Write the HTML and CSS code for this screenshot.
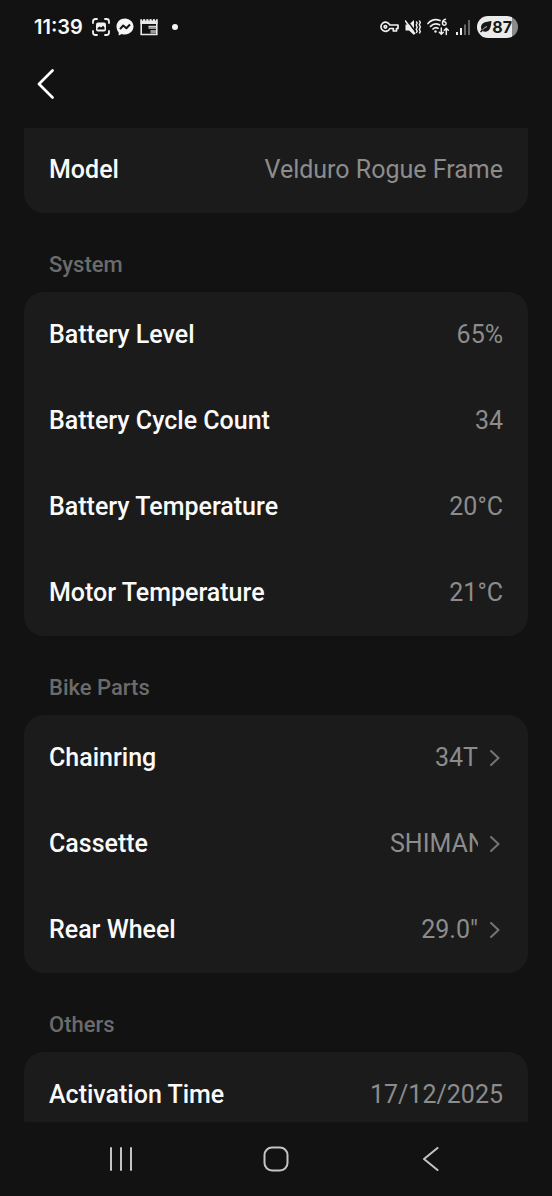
FILE: index.html
```html
<!DOCTYPE html>
<html lang="en">
<head>
<meta charset="utf-8">
<meta name="viewport" content="width=device-width, initial-scale=1">
<title>Bike details</title>
<link rel="stylesheet" href="styles.css">
</head>
<body>
<div class="status">
  <div class="status-group">
    <span class="clock">11:39</span>
    <svg width="18" height="18" viewBox="0 0 18 18" fill="none" stroke="#f2f2f2" stroke-width="1.8" stroke-linecap="round"><path d="M1 5V3.500Q1 1 3.500 1H5M13 1h1.500Q17 1 17 3.500V5M17 13v1.500Q17 17 14.500 17H13M5 17H3.500Q1 17 1 14.500V13"/><rect x="4" y="4.500" width="10" height="9" rx="2" fill="#f2f2f2" stroke="none"/><path d="M5.500 11.500V10l2-1.500 1.500 1L11 7.800l1.500 1.500v2.200z" fill="#121212" stroke="none"/></svg>
    <svg width="18" height="18" viewBox="0 0 18 18"><path d="M9 .5C4.200.5.500 4 .5 8.600c0 2.500 1 4.600 2.200 6v2.900l3.100-1.500c1 .4 2 .5 3.200.5 4.800 0 8.500-3.500 8.500-7.900S13.800.5 9 .5z" fill="#f5f5f5"/><path d="M4 11.200l3.200-3.700 3.200 2.700L14 6.500" fill="none" stroke="#121212" stroke-width="2" stroke-linejoin="round"/></svg>
    <svg width="18" height="18" viewBox="0 0 18 18"><path d="M1.200 2h15.600v14.500H1.200z" fill="none" stroke="#e8e8e8" stroke-width="1.600"/><path d="M.5 1.500h17V6H.5z" fill="#e8e8e8"/><path d="M2.500 0v2.500M5.700 0v2.500M9 0v2.500M12.300 0v2.500M15.500 0v2.500" stroke="#121212" stroke-width="1.200"/><path d="M8.500 8.300H16V11H8.500zM10.500 12H16v3.500h-5.500z" fill="#999"/><path d="M8.500 8.300H16" stroke="#e8e8e8"/></svg>
    <span class="dot"></span>
  </div>
  <div class="status-group">
    <svg width="19" height="12" viewBox="0 0 19 12" fill="none" stroke="#f0f0f0" stroke-width="1.700" stroke-linejoin="round"><path d="M9.800 4H18v3.500h-1.500V10h-3.200V7.500H9.800A4.600 4.600 0 1 1 9.800 4z"/><circle cx="5.400" cy="5.800" r="1.300"/></svg>
    <svg width="16" height="17" viewBox="0 0 16 17"><path d="M.5 5.500H4L9 1v15l-5-4.500H.5z" fill="#f0f0f0"/><path d="M1 0l10 13.500" stroke="#121212" stroke-width="1.600"/><path d="M0 1.500l10 13.500" stroke="#f0f0f0" stroke-width="1.600"/><path d="M11.200 2.500l1 1.500-1 2 1 2.200-1 2 1 2-1 1.800M14.300 1.500l1 2-1 2 1 2.500-1 2.500 1 2-1 2" fill="none" stroke="#f0f0f0" stroke-width="1.400"/></svg>
    <svg width="23" height="18" viewBox="0 0 23 18" fill="none" stroke="#eee" stroke-width="1.700" stroke-linecap="round"><path d="M1 5.500C4.500 1.500 9 1 13 2.500M3.500 8.300C6 5.700 9.500 5.300 12.500 6.800M6 11C7.500 9.600 9.500 9.500 11 10.300"/><circle cx="8.500" cy="13.500" r="1.200" fill="#eee" stroke="none"/><path d="M18.500 1.200C16 2 15.300 4 15.500 5.500a1.800 1.800 0 1 0 1.500-1.800" stroke-width="1.500"/><path d="M14.300 10v6M12.300 14.200l2 2 2-2M19.300 16.500v-6M17.300 12.200l2-2 2 2" stroke-width="1.500"/></svg>
    <svg width="15" height="15" viewBox="0 0 15 15"><path d="M0 12h2v3H0zM4 8h2v7H4z" fill="#eee"/><path d="M8 4.500h2V15H8zM12 0h2v15h-2z" fill="#666"/></svg>
    <span class="battery"><svg width="12" height="12" viewBox="0 0 12 12"><path d="M11.500 0C6 .8 1.500 1.500 1 6c-.1 1 .2 2 .6 2.700L0 10.500l1 1 1.700-1.600c1 .7 2.300 1 3.800.6C10.500 9.500 11 5 11.500 0z" fill="#181818"/><path d="M2.500 8.800Q4.500 6.500 7 5.500" stroke="#eee" stroke-width=".8" fill="none"/></svg>87</span>
  </div>
</div>

<header class="header">
  <button class="back" type="button" aria-label="Back"><svg width="18" height="30" viewBox="0 0 18 30" fill="none" stroke="#fff" stroke-width="2.700" stroke-linecap="round" stroke-linejoin="round"><path d="M16.500 1.500L3 15l13.500 13.500"/></svg></button>
</header>

<main class="content">
  <ul class="card card-continued">
    <li class="row"><span class="label">Model</span><span class="value">Velduro Rogue Frame</span></li>
  </ul>

  <h2 class="title">System</h2>
  <ul class="card">
    <li class="row"><span class="label">Battery Level</span><span class="value">65%</span></li>
    <li class="row"><span class="label">Battery Cycle Count</span><span class="value">34</span></li>
    <li class="row"><span class="label">Battery Temperature</span><span class="value">20°C</span></li>
    <li class="row"><span class="label">Motor Temperature</span><span class="value">21°C</span></li>
  </ul>

  <h2 class="title">Bike Parts</h2>
  <ul class="card">
    <li><button class="row" type="button"><span class="label">Chainring</span><span class="value value-short">34T</span><svg class="chevron" viewBox="0 0 12 20"><path d="M1 3l7.500 7-7.500 7"/></svg></button></li>
    <li><button class="row" type="button"><span class="label">Cassette</span><span class="value value-short">SHIMANO</span><svg class="chevron" viewBox="0 0 12 20"><path d="M1 3l7.500 7-7.500 7"/></svg></button></li>
    <li><button class="row" type="button"><span class="label">Rear Wheel</span><span class="value value-short">29.0"</span><svg class="chevron" viewBox="0 0 12 20"><path d="M1 3l7.500 7-7.500 7"/></svg></button></li>
  </ul>

  <h2 class="title">Others</h2>
  <ul class="card">
    <li class="row"><span class="label">Activation Time</span><span class="value">17/12/2025</span></li>
  </ul>
</main>

<nav class="navbar" aria-label="System navigation">
  <button type="button" aria-label="Recent apps"><svg width="24" height="26" viewBox="0 0 24 26" stroke="#c4c4c4" stroke-width="2" stroke-linecap="round"><path d="M2 2v22M12 2v22M22 2v22"/></svg></button>
  <button type="button" aria-label="Home"><svg width="26" height="26" viewBox="0 0 26 26" fill="none" stroke="#c4c4c4" stroke-width="2"><rect x="1.500" y="1.500" width="23" height="23" rx="7.500"/></svg></button>
  <button type="button" aria-label="Back"><svg width="16" height="26" viewBox="0 0 16 26" fill="none" stroke="#c4c4c4" stroke-width="2" stroke-linecap="round" stroke-linejoin="round"><path d="M14.500 2L1 13l13.500 11"/></svg></button>
</nav>
</body>
</html>
```
FILE: styles.css
```css
* {
  box-sizing: border-box;
}

body {
  margin: 0;
  height: 100vh;
  display: flex;
  flex-direction: column;
  background: #121212;
  color: #fafafa;
  font-family: Roboto, "Noto Sans", sans-serif;
  font-size: 25px;
  line-height: 30px;
}

button {
  margin: 0;
  padding: 0;
  border: 0;
  background: none;
  color: inherit;
  font: inherit;
  text-align: left;
}

svg {
  display: block;
  flex: none;
}

.status {
  flex: none;
  height: 54px;
  padding: 0 34px;
  display: flex;
  justify-content: space-between;
  align-items: center;
}

.status-group {
  display: flex;
  align-items: center;
  gap: 6px;
}

.clock {
  margin-right: 3px;
  font-family: Inter, sans-serif;
  font-size: 20px;
  font-weight: 600;
}

.dot {
  width: 6px;
  height: 6px;
  margin-left: 8px;
  border-radius: 50%;
  background: #f5f5f5;
}

.battery {
  display: flex;
  align-items: center;
  height: 22px;
  padding: 0 6px 0 3px;
  border-radius: 11px;
  background: linear-gradient(to right, #ebebeb 86%, #8a8a8a 86%);
  color: #181818;
  font-family: Inter, sans-serif;
  font-size: 16px;
  font-weight: 700;
}

.header {
  flex: none;
  height: 74px;
  padding: 0 36px;
  display: flex;
  align-items: flex-start;
}

.back {
  padding: 15px 0;
}

.content {
  flex: 1;
  min-height: 0;
  padding: 0 24px;
  overflow-y: auto;
  scrollbar-width: none;
}

.card {
  margin: 0;
  padding: 0;
  list-style: none;
  border-radius: 20px;
  background: #1b1b1b;
}

.card-continued {
  margin-top: -1px;
  border-radius: 0 0 20px 20px;
}

.row {
  width: 100%;
  padding: 28px 25px;
  display: flex;
  align-items: center;
}

.label {
  flex: 1;
  font-weight: 500;
}

.value {
  color: #8c8c8c;
  white-space: nowrap;
}

.value-short {
  width: 88px;
  overflow: hidden;
  text-align: right;
}

.chevron {
  width: 12px;
  height: 20px;
  margin: 0 1px 0 12px;
  fill: none;
  stroke: #757575;
  stroke-width: 2;
  stroke-linecap: round;
  stroke-linejoin: round;
}

.title {
  margin: 0;
  padding: 37px 25px 12px;
  color: #6b6b6b;
  font-size: 22px;
  font-weight: 500;
}

.navbar {
  flex: none;
  height: 74px;
  padding: 0 44px;
  display: flex;
}

.navbar button {
  flex: 1;
  display: flex;
  justify-content: center;
  align-items: center;
}
```
